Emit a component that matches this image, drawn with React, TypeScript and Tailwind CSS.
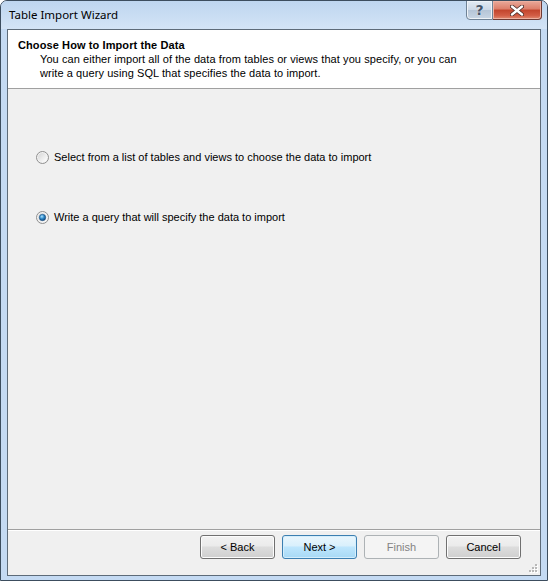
import React from "react";

function Radio({ checked }: { checked?: boolean }) {
  return (
    <svg width="13" height="13" viewBox="0 0 13 13" className="shrink-0">
      <defs>
        <linearGradient id={checked ? "rgc" : "rgu"} x1="0" y1="0" x2="1" y2="1">
          <stop offset="0" stopColor="#d6d6d6" />
          <stop offset="1" stopColor="#ffffff" />
        </linearGradient>
        <radialGradient id="dot" cx="0.4" cy="0.35" r="0.7">
          <stop offset="0" stopColor="#aee3ff" />
          <stop offset="0.5" stopColor="#2b87c7" />
          <stop offset="1" stopColor="#0d3e73" />
        </radialGradient>
      </defs>
      <circle cx="6.5" cy="6.5" r="6" fill="#f2f2f2" stroke="#8f8f8f" strokeWidth="1" />
      <circle cx="6.5" cy="6.5" r="4.5" fill={`url(#${checked ? "rgc" : "rgu"})`} />
      {checked && <circle cx="6.5" cy="6.5" r="3.2" fill="url(#dot)" stroke="#1c4f80" strokeWidth="0.6" />}
    </svg>
  );
}

function Btn({ children, variant }: { children: React.ReactNode; variant?: "default" | "primary" | "disabled" }) {
  const cls =
    variant === "primary"
      ? "border-[#3c7fb1] bg-[linear-gradient(#eaf6fd_0%,#d9f0fc_45%,#bee6fd_50%,#a7d9f5_100%)] text-black shadow-[inset_0_0_0_1px_#d4eefc]"
      : variant === "disabled"
      ? "border-[#adb2b5] bg-[#f4f4f4] text-[#838383]"
      : "border-[#707070] bg-[linear-gradient(#f2f2f2_0%,#ebebeb_45%,#dddddd_50%,#cfcfcf_100%)] text-black shadow-[inset_0_0_0_1px_#fcfcfc]";
  return (
    <div className={`w-[75px] h-[24px] rounded-[3px] border flex items-center justify-center text-[11px] ${cls}`}>
      {children}
    </div>
  );
}

export default function App() {
  return (
    <div
      className="w-[548px] h-[581px] bg-[#c4daf3] border border-[#3c4d5e] rounded-t-[7px] flex flex-col overflow-hidden"
      style={{ fontFamily: '"Liberation Sans", Arial, sans-serif' }}
    >
      {/* title bar */}
      <div className="h-[28px] shrink-0 relative bg-[linear-gradient(#bed6ef,#d3e4f6)] flex items-start">
        <div
          className="pl-[8px] pt-[5px] text-[11.5px] text-black"
          style={{ fontFamily: '"Noto Sans", "Open Sans", sans-serif' }}
        >
          Table Import Wizard
        </div>
        <div className="absolute right-[5px] top-[-1px] flex">
          <div className="w-[27px] h-[20px] border border-[#6f8296] rounded-bl-[4px] bg-[linear-gradient(#e3ebf4_0%,#ccd8e6_50%,#b5c5d7_51%,#c9d6e4_100%)] flex items-center justify-center shadow-[inset_0_0_0_1px_#eef3f8]">
            <span className="text-[14px] font-bold text-[#45556a] leading-none [text-shadow:0_0_1px_#fff]" style={{ fontFamily: '"DejaVu Sans", sans-serif' }}>?</span>
          </div>
          <div className="w-[49px] h-[20px] border border-l-0 border-[#6e3a33] rounded-br-[4px] bg-[linear-gradient(#e9a99a_0%,#dc7d69_45%,#c2442c_50%,#d25d45_80%,#e08a70_100%)] flex items-center justify-center shadow-[inset_0_0_0_1px_#eeb0a0]">
            <svg width="14" height="11" viewBox="0 0 14 11">
              <path d="M2 1.5 L12 9.5 M12 1.5 L2 9.5" stroke="#4a2a26" strokeWidth="4" strokeLinecap="round" />
              <path d="M2 1.5 L12 9.5 M12 1.5 L2 9.5" stroke="#ffffff" strokeWidth="2.4" strokeLinecap="round" />
            </svg>
          </div>
        </div>
      </div>

      {/* client area */}
      <div className="mx-[6px] flex-1 border border-[#5d6b79] bg-[#f0f0f0] flex flex-col">
        {/* header */}
        <div className="h-[59px] shrink-0 bg-white border-b border-[#a0a0a0] pl-[10px] pt-[8px] text-[11px] leading-[14px] text-black">
          <div className="font-bold tracking-[0.1px]">Choose How to Import the Data</div>
          <div className="pl-[22px] tracking-[0.08px]">
            You can either import all of the data from tables or views that you specify, or you can
            <br />
            write a query using SQL that specifies the data to import.
          </div>
        </div>

        {/* body */}
        <div className="flex-1 flex flex-col pl-[28px] pt-[62px] gap-[47px] text-[11px] text-black">
          <div className="flex items-center gap-[5px] h-[13px]">
            <Radio />
            <span>Select from a list of tables and views to choose the data to import</span>
          </div>
          <div className="flex items-center gap-[5px] h-[13px]">
            <Radio checked />
            <span>Write a query that will specify the data to import</span>
          </div>
        </div>

        {/* footer */}
        <div className="h-[46px] shrink-0 border-t border-[#a0a0a0] shadow-[inset_0_1px_0_#ffffff] relative flex justify-end items-start pt-[5px] pr-[19px] gap-[7px]">
          <Btn>&lt; Back</Btn>
          <Btn variant="primary">Next &gt;</Btn>
          <Btn variant="disabled">Finish</Btn>
          <Btn>Cancel</Btn>
          <svg className="absolute right-[2px] bottom-[2px]" width="10" height="10" viewBox="0 0 10 10">
            {[
              [7, 1], [4, 4], [7, 4], [1, 7], [4, 7], [7, 7],
            ].map(([x, y], i) => (
              <g key={i}>
                <rect x={x + 1} y={y + 1} width="2" height="2" fill="#ffffff" />
                <rect x={x} y={y} width="2" height="2" fill="#b8b8b8" />
              </g>
            ))}
          </svg>
        </div>
      </div>
      <div className="h-[4px] shrink-0" />
    </div>
  );
}
